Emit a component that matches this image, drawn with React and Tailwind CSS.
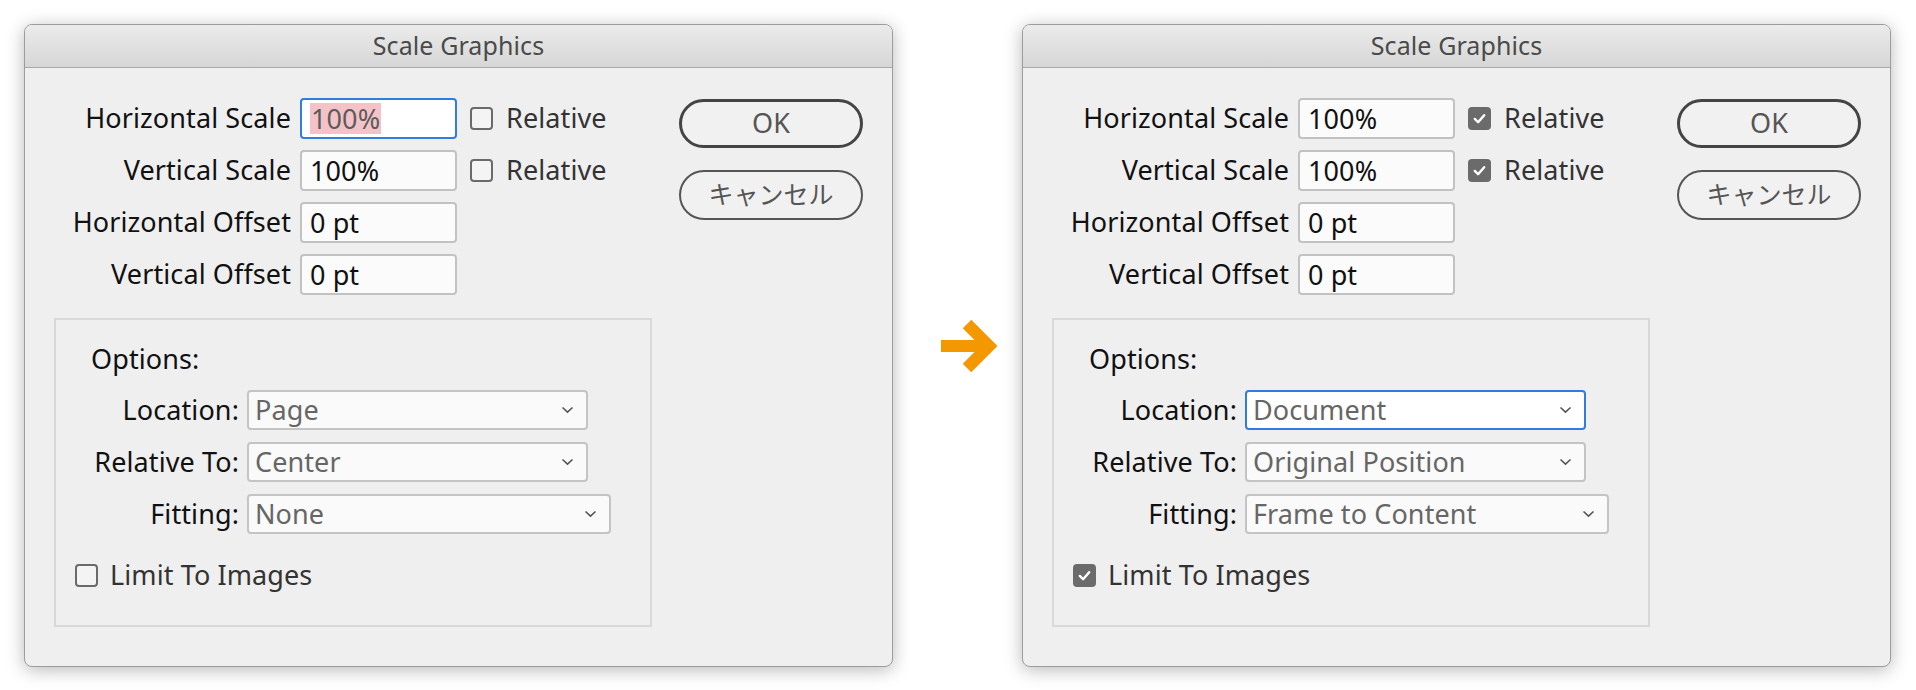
import React from "react";

const font = { fontFamily: '"Noto Sans", "Noto Sans CJK JP", sans-serif' };

function CheckBox({ checked }) {
  if (checked) {
    return (
      <span className="w-[23px] h-[23px] rounded-[4px] bg-[#6b6b6b] flex items-center justify-center shrink-0">
        <svg width="15" height="15" viewBox="0 0 16 16">
          <path d="M3 8.5 L6.5 12 L13 4.5" fill="none" stroke="#ffffff" strokeWidth="2.6" strokeLinecap="round" strokeLinejoin="round" />
        </svg>
      </span>
    );
  }
  return <span className="w-[23px] h-[23px] rounded-[4px] border-2 border-[#6a6a6a] bg-[#f4f4f4] shrink-0" />;
}

function TextBox({ value, focused }) {
  return (
    <div
      className={
        focused
          ? "ml-[9px] w-[157px] h-[41px] rounded-[4px] border-2 border-[#2f7de1] bg-white flex items-center px-[8px]"
          : "ml-[9px] w-[157px] h-[41px] rounded-[4px] border-2 border-[#c2c2c2] bg-[#fbfbfb] flex items-center px-[8px]"
      }
    >
      {focused ? (
        <span className="bg-[#f5c3c7] text-[#5c5c5c] leading-[31px] px-[1px]">{value}</span>
      ) : (
        <span className="text-[#111] leading-[31px]">{value}</span>
      )}
    </div>
  );
}

function Chevron() {
  return (
    <svg width="13" height="8" viewBox="0 0 13 8">
      <path d="M1.5 1.5 L6.5 6.2 L11.5 1.5" fill="none" stroke="#555" strokeWidth="1.6" />
    </svg>
  );
}

function Select({ value, width, focused }) {
  return (
    <div
      className={
        focused
          ? "ml-[8px] h-[40px] rounded-[4px] border-2 border-[#2f7de1] bg-white flex items-center justify-between pl-[6px] pr-[12px]"
          : "ml-[8px] h-[40px] rounded-[4px] border-2 border-[#c4c4c4] bg-[#fafafa] flex items-center justify-between pl-[6px] pr-[12px]"
      }
      style={{ width }}
    >
      <span className="text-[#666]">{value}</span>
      <Chevron />
    </div>
  );
}

function FieldRow({ label, value, focused, relative }) {
  return (
    <div className="flex items-center h-[41px]">
      <span className="w-[266px] text-right text-[#111]">{label}</span>
      <TextBox value={value} focused={focused} />
      {relative !== undefined && (
        <div className="flex items-center ml-[13px]">
          <CheckBox checked={relative} />
          <span className="ml-[13px] text-[#333]">Relative</span>
        </div>
      )}
    </div>
  );
}

function SelectRow({ label, value, width, focused }) {
  return (
    <div className="flex items-center h-[40px]">
      <span className="w-[183px] text-right text-[#111]">{label}</span>
      <Select value={value} width={width} focused={focused} />
    </div>
  );
}

function Dialog({ data }) {
  return (
    <div className="w-[869px] h-[643px] rounded-[8px] border border-[#9c9c9c] bg-[#efefef] shadow-[0_3px_18px_rgba(0,0,0,0.28)] overflow-hidden flex flex-col shrink-0">
      <div className="h-[43px] bg-gradient-to-b from-[#ebebeb] to-[#d6d6d6] border-b border-[#a9a9a9] flex items-center justify-center text-[25px] text-[#4a4a4a]">
        Scale Graphics
      </div>
      <div className="flex flex-1">
        <div className="flex flex-col w-[654px]">
          <div className="flex flex-col gap-[11px] pt-[30px]">
            <FieldRow label="Horizontal Scale" value="100%" focused={data.focusFirst} relative={data.relative} />
            <FieldRow label="Vertical Scale" value="100%" relative={data.relative} />
            <FieldRow label="Horizontal Offset" value="0 pt" />
            <FieldRow label="Vertical Offset" value="0 pt" />
          </div>
          <div className="ml-[29px] mt-[23px] w-[598px] h-[309px] border-2 border-[#d9d9d9] flex flex-col">
            <div className="h-[36px] mt-[21px] ml-[35px] flex items-center text-[#111]">Options:</div>
            <div className="flex flex-col gap-[12px] mt-[13px]">
              <SelectRow label="Location:" value={data.location} width={341} focused={data.focusLocation} />
              <SelectRow label="Relative To:" value={data.relativeTo} width={341} />
              <SelectRow label="Fitting:" value={data.fitting} width={364} />
            </div>
            <div className="flex items-center h-[40px] mt-[21px] ml-[19px]">
              <CheckBox checked={data.limit} />
              <span className="ml-[12px] text-[#333]">Limit To Images</span>
            </div>
          </div>
        </div>
        <div className="flex flex-col pt-[31px]">
          <button className="w-[184px] h-[49px] rounded-full border-[3px] border-[#444] bg-[#f1f1f1] text-[#555] text-[27px] flex items-center justify-center">
            OK
          </button>
          <button className="mt-[22px] w-[184px] h-[50px] rounded-full border-2 border-[#555] bg-[#f1f1f1] text-[#555] text-[25px] tracking-normal flex items-center justify-center">
            キャンセル
          </button>
        </div>
      </div>
    </div>
  );
}

const before = {
  focusFirst: true,
  relative: false,
  location: "Page",
  relativeTo: "Center",
  fitting: "None",
  focusLocation: false,
  limit: false,
};

const after = {
  focusFirst: false,
  relative: true,
  location: "Document",
  relativeTo: "Original Position",
  fitting: "Frame to Content",
  focusLocation: true,
  limit: true,
};

export default function App() {
  return (
    <div className="w-[1916px] h-[690px] bg-white flex items-start pl-[24px] pt-[24px] text-[27px] tracking-[0.1px]" style={font}>
      <Dialog data={before} />
      <div className="w-[129px] h-[643px] flex items-center shrink-0">
        <svg className="ml-[48px]" width="60" height="52" viewBox="0 0 60 52">
          <path d="M0 26 H50" stroke="#f39800" strokeWidth="12" fill="none" />
          <path d="M26 4 L48 26 L26 48" stroke="#f39800" strokeWidth="12" fill="none" strokeLinejoin="miter" />
        </svg>
      </div>
      <Dialog data={after} />
    </div>
  );
}
